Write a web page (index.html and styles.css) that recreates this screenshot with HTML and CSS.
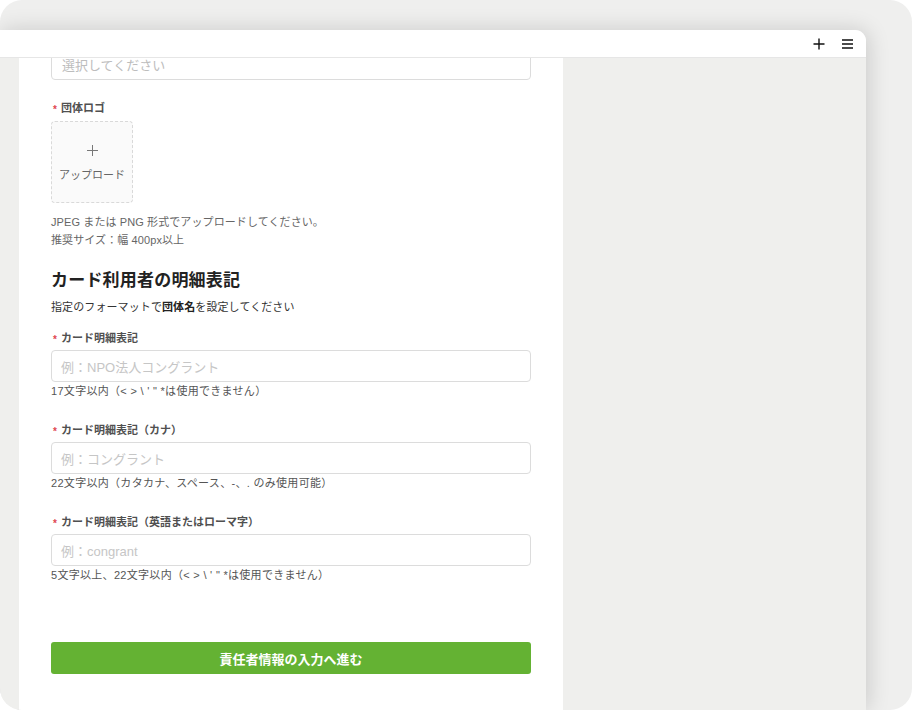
FILE: index.html
```html
<!DOCTYPE html>
<html lang="ja">
<head>
<meta charset="utf-8">
<title>団体情報</title>
<link rel="stylesheet" href="styles.css">
</head>
<body>
<div class="frame">
  <div class="window">
    <div class="topbar">
      <span class="tb-icon" aria-label="追加">
        <svg width="12" height="12" viewBox="0 0 12 12"><path d="M6 0.5V11.5M0.5 6H11.5" stroke="#111" stroke-width="1.4" fill="none"/></svg>
      </span>
      <span class="tb-icon" aria-label="メニュー">
        <svg width="11" height="10" viewBox="0 0 11 10"><path d="M0 1H11M0 5H11M0 9H11" stroke="#111" stroke-width="1.6" fill="none"/></svg>
      </span>
    </div>
    <div class="content">
      <div class="gutter"></div>
      <div class="panel">
        <div class="select">選択してください</div>

        <div class="logo-field">
          <div class="label"><span class="req">*</span>団体ロゴ</div>
          <div class="upload">
            <svg width="11" height="11" viewBox="0 0 11 11"><path d="M5.5 0V11M0 5.5H11" stroke="#777" stroke-width="1" fill="none"/></svg>
            <span>アップロード</span>
          </div>
          <p class="hint">JPEG または PNG 形式でアップロードしてください。<br>推奨サイズ：幅 400px以上</p>
        </div>

        <h2 class="heading">カード利用者の明細表記</h2>
        <p class="desc">指定のフォーマットで<b>団体名</b>を設定してください</p>

        <div class="field first">
          <div class="label"><span class="req">*</span>カード明細表記</div>
          <div class="input">例：NPO法人コングラント</div>
          <div class="help">17文字以内（&lt; &gt; \ ' " *は使用できません）</div>
        </div>
        <div class="field">
          <div class="label"><span class="req">*</span>カード明細表記（カナ）</div>
          <div class="input">例：コングラント</div>
          <div class="help">22文字以内（カタカナ、スペース、-、. のみ使用可能）</div>
        </div>
        <div class="field">
          <div class="label"><span class="req">*</span>カード明細表記（英語またはローマ字）</div>
          <div class="input">例：congrant</div>
          <div class="help">5文字以上、22文字以内（&lt; &gt; \ ' " *は使用できません）</div>
        </div>

        <button class="submit" type="button">責任者情報の入力へ進む</button>
      </div>
      <div class="side"></div>
    </div>
  </div>
</div>
</body>
</html>
```

FILE: styles.css
```css
html, body {
  margin: 0;
  padding: 0;
  background: #ffffff;
}
body {
  width: 912px;
  height: 710px;
  overflow: hidden;
  font-family: "Liberation Sans", "Noto Sans CJK JP", sans-serif;
}
.frame {
  width: 912px;
  height: 710px;
  border-radius: 22px;
  background: #efefee;
  overflow: hidden;
  display: flex;
  flex-direction: column;
  padding-top: 30px;
  box-sizing: border-box;
}
.window {
  width: 866px;
  flex: 1;
  display: flex;
  flex-direction: column;
  border-top-right-radius: 11px;
  background: #efefed;
  box-shadow: 2px 0 22px rgba(0, 0, 0, 0.16);
  overflow: hidden;
}
.topbar {
  height: 28px;
  flex: none;
  background: #ffffff;
  border-bottom: 1px solid #e6e6e6;
  box-sizing: border-box;
  display: flex;
  align-items: center;
  justify-content: flex-end;
  gap: 16px;
  padding-right: 13px;
  padding-top: 1px;
}
.tb-icon {
  display: flex;
  align-items: center;
  justify-content: center;
  width: 12px;
  height: 12px;
}
.content {
  flex: 1;
  display: flex;
  overflow: hidden;
}
.gutter {
  width: 19px;
  flex: none;
}
.panel {
  width: 544px;
  flex: none;
  background: #ffffff;
  padding: 0 32px;
  box-sizing: border-box;
  display: flex;
  flex-direction: column;
  color: #333;
}
.side {
  flex: 1;
}
.select {
  height: 32px;
  margin-top: -10px;
  flex: none;
  border: 1px solid #dcdcdc;
  border-radius: 4px;
  box-sizing: border-box;
  padding: 0 10px;
  display: flex;
  align-items: center;
  font-size: 13px;
  color: #bdbdbd;
}
.logo-field {
  margin-top: 20px;
}
.label {
  font-size: 11px;
  line-height: 16px;
  height: 16px;
  font-weight: bold;
  color: #505050;
  display: flex;
  align-items: center;
}
.req {
  color: #e0454f;
  font-size: 10px;
  margin: 3px 4px 0 2px;
  font-weight: bold;
}
.upload {
  margin-top: 5px;
  width: 82px;
  height: 82px;
  box-sizing: border-box;
  border: 1px dashed #d9d9d9;
  border-radius: 4px;
  background: #fafafa;
  display: flex;
  flex-direction: column;
  align-items: center;
  justify-content: center;
  gap: 12px;
  padding-top: 2px;
  font-size: 11px;
  color: #666;
}
.upload span {
  line-height: 14px;
}
.hint {
  margin: 10px 0 0;
  font-size: 11px;
  line-height: 18px;
  color: #666;
  letter-spacing: 0.1px;
}
.heading {
  margin: 20px 0 0;
  font-size: 17px;
  line-height: 24px;
  font-weight: bold;
  color: #222;
  letter-spacing: 0.2px;
}
.desc {
  margin: 6px 0 0;
  font-size: 11px;
  line-height: 16px;
  color: #333;
  letter-spacing: 0.1px;
}
.desc b {
  color: #222;
}
.field {
  margin-top: 23px;
}
.field.first {
  margin-top: 15px;
}
.input {
  margin-top: 4px;
  height: 32px;
  border: 1px solid #dcdcdc;
  border-radius: 4px;
  box-sizing: border-box;
  padding: 0 9px;
  display: flex;
  align-items: center;
  font-size: 13px;
  color: #c6c6c6;
}
.help {
  margin-top: 1px;
  font-size: 11px;
  line-height: 16px;
  color: #555;
  letter-spacing: 0.3px;
}
.submit {
  margin-top: 59px;
  height: 32px;
  border: none;
  border-radius: 3px;
  background: #64b233;
  color: #ffffff;
  font-family: inherit;
  font-size: 13px;
  font-weight: bold;
  width: 100%;
  padding: 0;
  flex: none;
}
```
